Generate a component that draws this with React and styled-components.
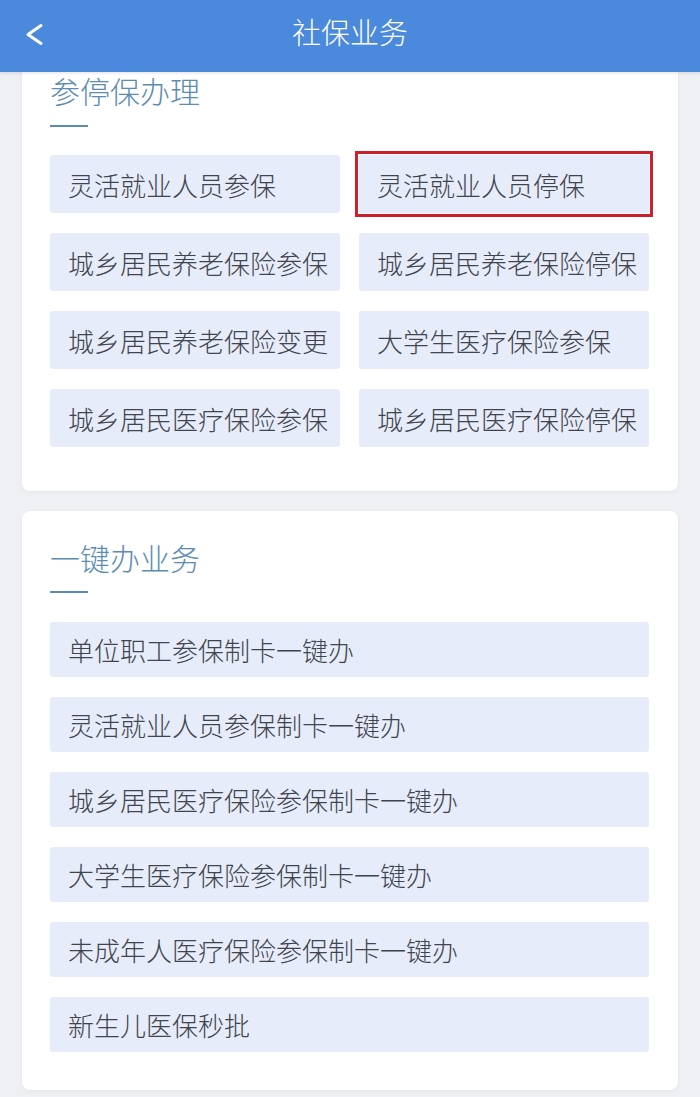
import styled, { createGlobalStyle } from 'styled-components';

const GlobalStyle = createGlobalStyle`
    html, body {
        margin: 0;
        padding: 0;
        background: #eef0f3;
        font-family: "Noto Sans CJK SC", "Noto Sans", sans-serif;
    }
`

const Page = styled.div`
    width: 700px;
    height: 1097px;
    overflow: hidden;
    background: #eef0f3;
    display: flex;
    flex-direction: column;
`

const Header = styled.div`
    height: 72px;
    box-sizing: border-box;
    padding-bottom: 10px;
    flex-shrink: 0;
    background: #4a89dc;
    display: flex;
    align-items: center;
    justify-content: center;
    position: relative;
    color: #ffffff;
    font-size: 29px;
    font-weight: 300;
    box-shadow: 0 1px 3px rgba(0, 0, 0, 0.12);
    z-index: 2;
`

const BackButton = styled.button`
    position: absolute;
    left: 20px;
    top: 20px;
    width: 30px;
    height: 30px;
    border: none;
    background: none;
    padding: 0;
    cursor: pointer;
`

const Content = styled.div`
    display: flex;
    flex-direction: column;
    gap: 20px;
    padding: 0 22px;
`

const Card = styled.div`
    background: #ffffff;
    border-radius: ${p => p.$clipped ? '0 0 8px 8px' : '8px'};
    box-shadow: 0 1px 4px rgba(0, 0, 0, 0.05);
    padding: ${p => p.$clipped ? '0 29px 44px 28px' : '28px 29px 38px 28px'};
`

const SectionTitle = styled.div`
    font-size: 30px;
    font-weight: 300;
    line-height: 36px;
    color: #5b8cb2;
`

const Underline = styled.div`
    width: 38px;
    height: 2px;
    background: #5a8db5;
    margin: ${p => p.$tight ? '16px 0 29px' : '17px 0 28px'};
`

const Grid = styled.div`
    display: grid;
    grid-template-columns: 1fr 1fr;
    column-gap: 19px;
    row-gap: 20px;
`

const List = styled.div`
    display: flex;
    flex-direction: column;
    gap: 20px;
`

const Item = styled.div`
    height: ${p => p.$h}px;
    background: #e7ecfa;
    border-radius: ${p => p.$marked ? '0' : '3px'};
    display: flex;
    align-items: center;
    padding-left: 18px;
    font-size: 26px;
    font-weight: 300;
    color: #40444d;
    white-space: nowrap;
    outline: ${p => p.$marked ? '3px solid #cf1f2a' : 'none'};
    outline-offset: 1px;
`

const joinItems = [
    '灵活就业人员参保',
    '灵活就业人员停保',
    '城乡居民养老保险参保',
    '城乡居民养老保险停保',
    '城乡居民养老保险变更',
    '大学生医疗保险参保',
    '城乡居民医疗保险参保',
    '城乡居民医疗保险停保',
]

const quickItems = [
    '单位职工参保制卡一键办',
    '灵活就业人员参保制卡一键办',
    '城乡居民医疗保险参保制卡一键办',
    '大学生医疗保险参保制卡一键办',
    '未成年人医疗保险参保制卡一键办',
    '新生儿医保秒批',
]

const App = () => {
    return (
        <>
            <GlobalStyle />
            <Page>
                <Header>
                    <BackButton>
                        <svg width="30" height="30" viewBox="0 0 30 30">
                            <polyline points="21,5.5 8,14.5 21,23.5" fill="none" stroke="#ffffff" strokeWidth="3" strokeLinecap="round" strokeLinejoin="round" />
                        </svg>
                    </BackButton>
                    社保业务
                </Header>
                <Content>
                    <Card $clipped>
                        <SectionTitle>参停保办理</SectionTitle>
                        <Underline />
                        <Grid>
                            {joinItems.map((t, i) => (
                                <Item key={t} $h={58} $marked={i === 1}>{t}</Item>
                            ))}
                        </Grid>
                    </Card>
                    <Card>
                        <SectionTitle>一键办业务</SectionTitle>
                        <Underline $tight />
                        <List>
                            {quickItems.map(t => (
                                <Item key={t} $h={55}>{t}</Item>
                            ))}
                        </List>
                    </Card>
                </Content>
            </Page>
        </>
    )
}

export default App;
